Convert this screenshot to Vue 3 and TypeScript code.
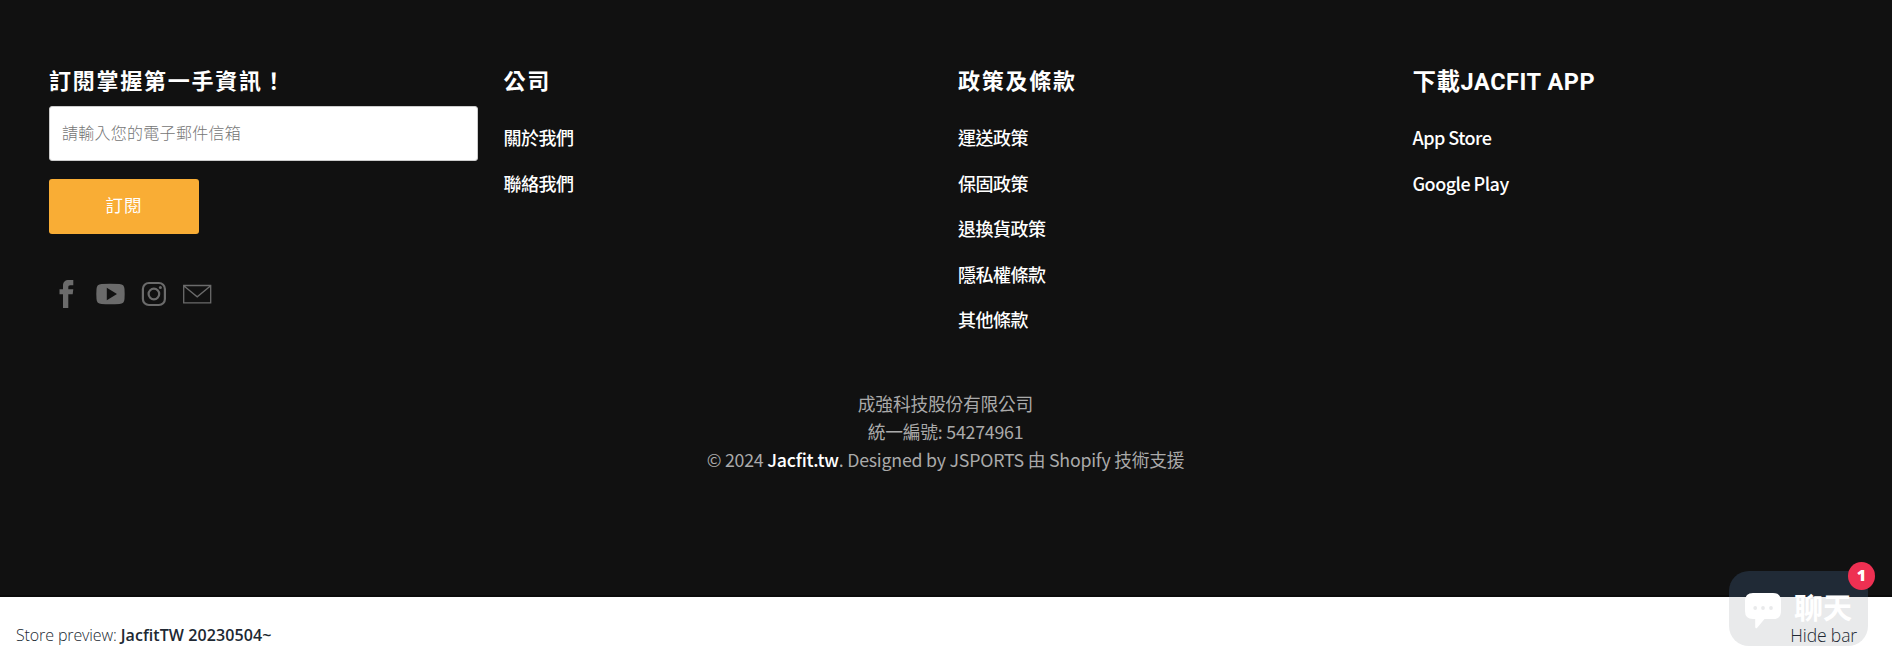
<script setup lang="ts">
interface LinkColumn {
  title: string
  links: string[]
}

const columns: LinkColumn[] = [
  { title: '公司', links: ['關於我們', '聯絡我們'] },
  { title: '政策及條款', links: ['運送政策', '保固政策', '退換貨政策', '隱私權條款', '其他條款'] },
  { title: '下載JACFIT APP', links: ['App Store', 'Google Play'] },
]
</script>

<template>
  <div class="page">
    <footer class="footer">
      <div class="columns">
        <section class="column">
          <h6 class="title">訂閱掌握第一手資訊！</h6>
          <form class="newsletter" @submit.prevent>
            <input class="email" type="email" placeholder="請輸入您的電子郵件信箱" />
            <button class="subscribe" type="submit">訂閱</button>
          </form>
          <div class="social">
            <svg viewBox="0 0 30 30"><path d="M8.500 10.200h3.500V6.800C12 3 14.200 1 17.800 1H22.300v5.200h-3c-1.500 0-2 .7-2 2v2h5l-.6 5.100h-4.400V29H12V15.300H8.500z" /></svg>
            <svg viewBox="0 0 30 30"><path fill-rule="evenodd" d="M6.500 5Q15 4.400 24.500 5Q29.300 5.200 29.500 10Q29.900 15 29.500 20Q29.300 24.800 24.500 25Q15 25.600 6.500 25Q1.700 24.800 1.500 20Q1.100 15 1.500 10Q1.700 5.200 6.500 5zM11.800 8.700v12.500L22 15z" /></svg>
            <svg viewBox="0 0 30 30" class="stroked"><rect x="4.900" y="4" width="22" height="22" rx="6" stroke-width="2.200" /><circle cx="15.900" cy="15" r="5.300" stroke-width="2.200" /><circle class="dot" cx="22.400" cy="8.500" r="1.500" /></svg>
            <svg viewBox="0 0 30 30" class="stroked"><path stroke-width="1.300" d="M1.700 6.500h27v17.300h-27zM2 7l13.200 10.800L28.400 7" /></svg>
          </div>
        </section>
        <section v-for="column in columns" :key="column.title" class="column">
          <h6 class="title">{{ column.title }}</h6>
          <ul class="links">
            <li v-for="link in column.links" :key="link"><a>{{ link }}</a></li>
          </ul>
        </section>
      </div>
      <div class="legal">
        <p>成強科技股份有限公司</p>
        <p>統一編號: 54274961</p>
        <p>© 2024 <a>Jacfit.tw</a>. Designed by JSPORTS 由 Shopify 技術支援</p>
      </div>
    </footer>

    <div class="chat">
      <svg class="bubble" viewBox="0 0 36 37">
        <path d="M8 0h20q8 0 8 8v10q0 8-8 8h-8.500l-7.300 8.700q-1.700 1.500-2-.7V26H8q-8 0-8-8V8q0-8 8-8z" fill="#fff" />
        <g fill="#202a36"><circle cx="10.200" cy="15" r="1.900" /><circle cx="18" cy="15" r="1.900" /><circle cx="26" cy="15" r="1.900" /></g>
      </svg>
      <span>聊天</span>
    </div>
    <div class="badge">1</div>
    <div class="preview">
      <span class="store">Store preview: <b>JacfitTW 20230504~</b></span>
      <a class="hide">Hide bar</a>
    </div>
  </div>
</template>

<style>
body {
  margin: 0;
  background: #fff;
}
</style>

<style scoped>
.page {
  position: relative;
  height: 671px;
  overflow: hidden;
  font-family: "Noto Sans CJK TC", sans-serif;
}
.footer {
  box-sizing: border-box;
  height: 597px;
  padding: 67px 23px 0 49px;
  background: #111;
  border-bottom: 2px solid #0b0b0b;
}
.columns {
  display: grid;
  grid-template-columns: repeat(4, 454.500px);
  height: 322px;
}
.title {
  margin: 0;
  height: 39px;
  font: 700 22px/30px Roboto, "Noto Sans CJK TC", sans-serif;
  letter-spacing: 1.750px;
  color: #fff;
}
.column:last-child .title {
  font-size: 23.500px;
  line-height: 31px;
  letter-spacing: 0.550px;
}
.newsletter {
  display: flex;
  flex-direction: column;
  align-items: flex-start;
  gap: 18px;
}
.email,
.subscribe {
  box-sizing: border-box;
  height: 55px;
  border-radius: 3px;
  font-family: "Noto Sans CJK TC", sans-serif;
}
.email {
  width: 429px;
  padding: 0 12px 4px;
  border: 1px solid #ccc;
  background: #fff;
  font-size: 16px;
  font-weight: 300;
  letter-spacing: 0.270px;
}
.email::placeholder {
  color: #757575;
}
.subscribe {
  width: 150px;
  padding: 0 0 5px;
  border: 0;
  background: #f9ad35;
  color: #fff;
  font-size: 17.500px;
  font-weight: 400;
  letter-spacing: 1px;
}
.social {
  display: flex;
  gap: 13.600px;
  margin-top: 45px;
  padding-left: 2px;
}
.social svg {
  width: 30px;
  height: 30px;
  fill: #6b6b6b;
}
.social .stroked {
  fill: none;
  stroke: #6b6b6b;
}
.social .dot {
  fill: #6b6b6b;
  stroke: none;
}
.links {
  margin: 0;
  padding: 9px 0 0;
  list-style: none;
  font-size: 18px;
  font-weight: 500;
  line-height: 45.500px;
  letter-spacing: -0.520px;
  color: #fff;
}
.legal {
  width: 1793px;
  text-align: center;
  font-size: 17.750px;
  letter-spacing: -0.220px;
  line-height: 28px;
  color: #aaa;
}
.legal p {
  margin: 0;
}
.legal a {
  color: #fff;
  font-weight: 500;
}
.chat {
  position: absolute;
  left: 1729px;
  top: 571px;
  box-sizing: border-box;
  width: 139px;
  height: 75px;
  display: flex;
  align-items: center;
  gap: 13px;
  padding: 0 0 0 16px;
  border-radius: 20px;
  background: #202a36;
  color: #fff;
  font-size: 29px;
  font-weight: 700;
  line-height: 71px;
}
.chat span {
  height: 75px;
}
.bubble {
  width: 36px;
  height: 37px;
  margin-top: 5px;
}
.badge {
  position: absolute;
  z-index: 2;
  left: 1848px;
  top: 562px;
  width: 27px;
  height: 28px;
  border-radius: 50%;
  background: #ee3052;
  color: #fff;
  text-align: center;
  font: 800 16px/27px "Open Sans", sans-serif;
}
.preview {
  position: absolute;
  inset: 597px 0 0;
  display: flex;
  justify-content: space-between;
  align-items: center;
  padding: 2px 35px 0 16px;
  background: rgba(255, 255, 255, 0.9);
  font-family: "Open Sans", "Noto Sans", sans-serif;
  font-size: 16px;
  font-weight: 350;
  letter-spacing: -0.120px;
  color: #202832;
}
.preview b {
  font-weight: 600;
  letter-spacing: 0.080px;
}
.hide {
  font-size: 17.500px;
}
</style>
